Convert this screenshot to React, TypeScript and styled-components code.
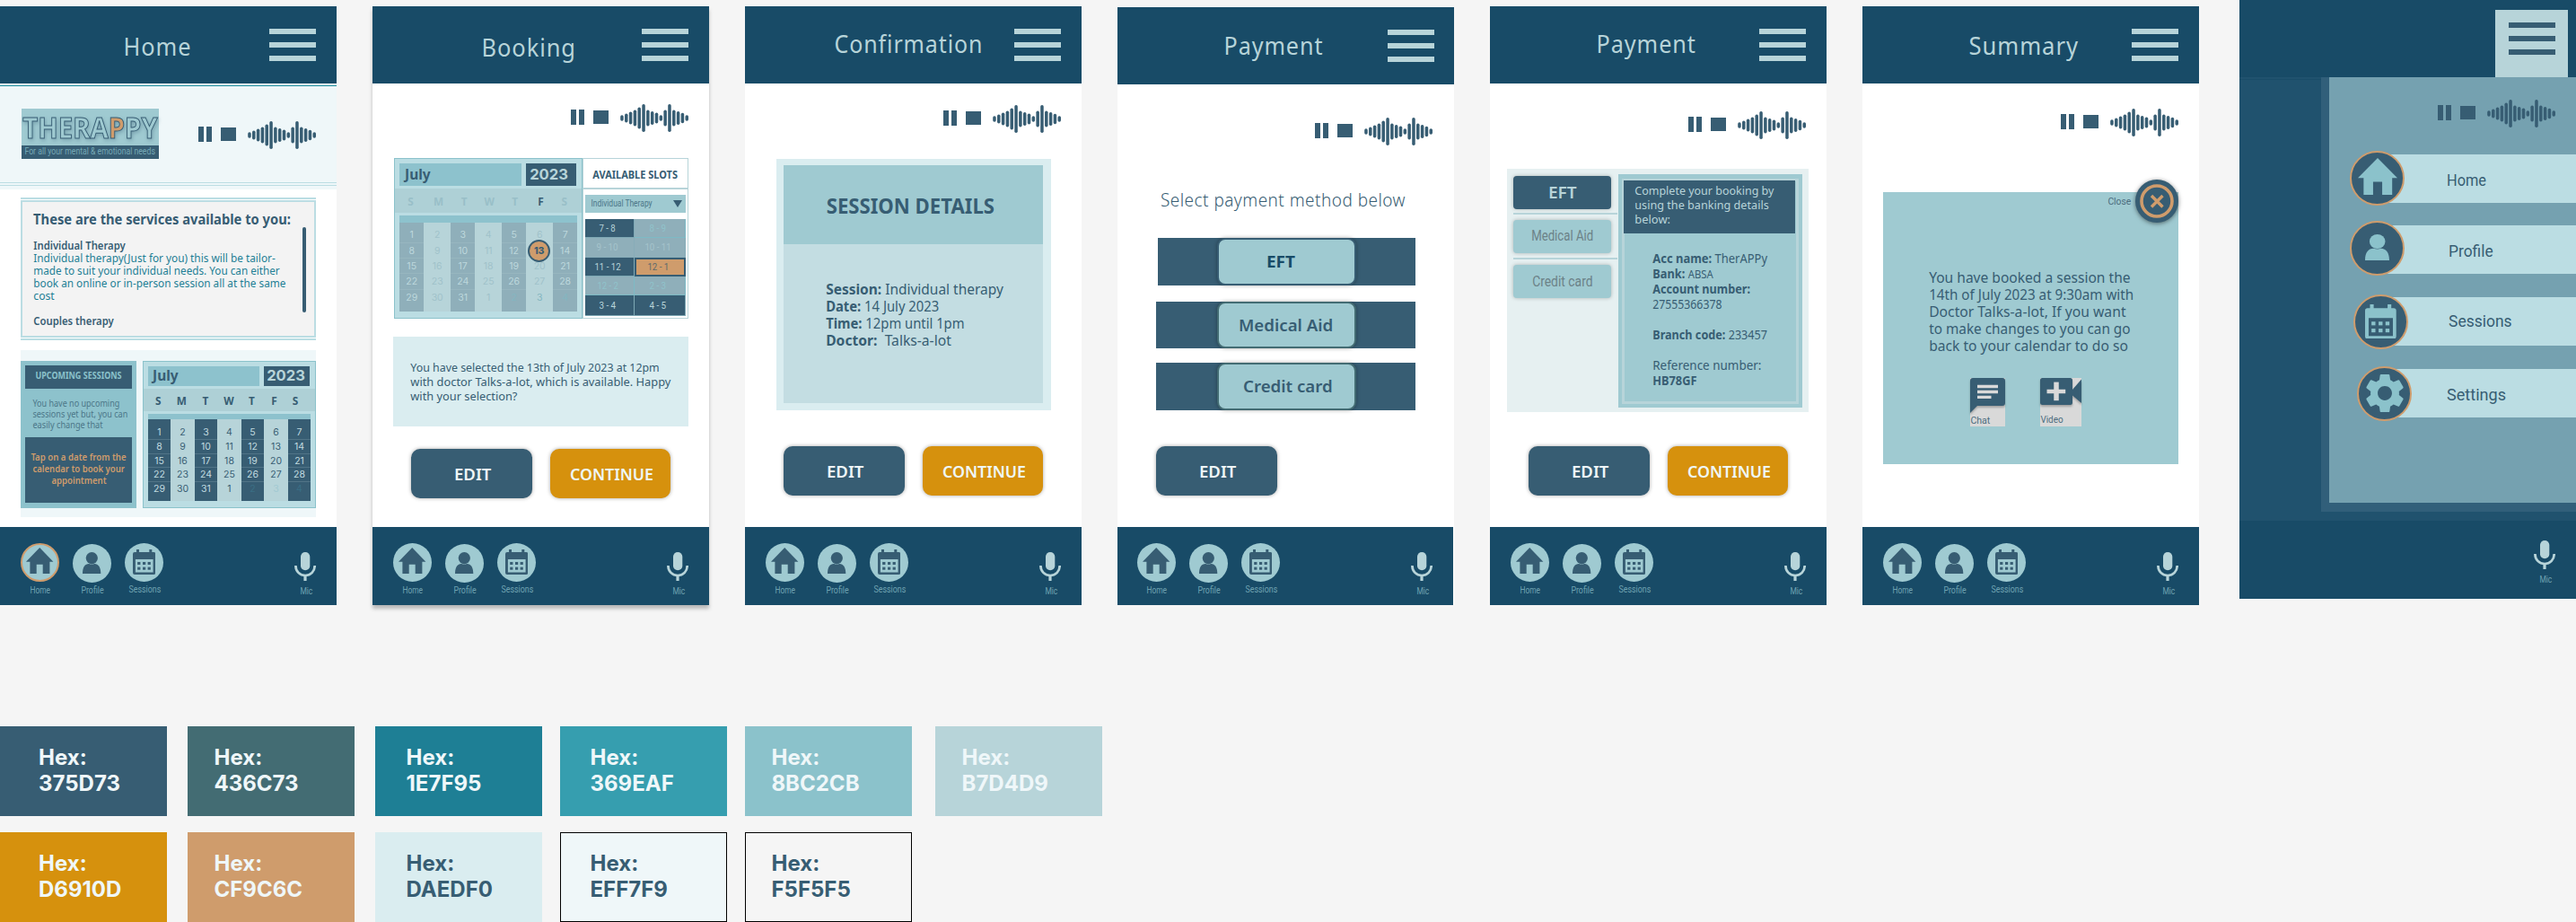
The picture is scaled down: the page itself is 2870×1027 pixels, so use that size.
import React, { useLayoutEffect, useRef, useState } from "react";
import styled, { createGlobalStyle } from "styled-components";

const c = {
  navy: "#184b67",
  slate: "#375d73",
  green: "#436c73",
  teal: "#1e7f95",
  aqua: "#8bc2cb",
  mist: "#b7d4d9",
  pool: "#9fcad1",
  sky: "#bbdde3",
  ice: "#daedf0",
  frost: "#eff7f9",
  smoke: "#f5f5f5",
  amber: "#d6910d",
  copper: "#cf9c6c",
};

const HUMAN = '"Noto Sans", "Open Sans", sans-serif';
const NARROW = 'Roboto, "Liberation Sans", sans-serif';
const GEO = 'Inter, "Liberation Sans", sans-serif';

const GlobalStyle = createGlobalStyle`
  * { box-sizing: border-box; }
  body { margin: 0; background: ${c.smoke}; font-family: ${HUMAN}; }
`;

/* ---------- text ---------- */

const LineBox = styled.div<{ $w: number; $size: number; $lh: number; $weight?: number; $color?: string; $font?: string; $ls?: number; $x?: number; $y?: number }>`
  flex: none;
  width: ${(p) => p.$w}px;
  height: ${(p) => p.$lh}px;
  line-height: ${(p) => p.$lh}px;
  font-family: ${(p) => p.$font || HUMAN};
  font-size: ${(p) => p.$size}px;
  font-weight: ${(p) => p.$weight || 400};
  letter-spacing: ${(p) => p.$ls || 0}px;
  color: ${(p) => p.$color || c.slate};
  margin: ${(p) => p.$y || 0}px 0 0 ${(p) => p.$x || 0}px;
  white-space: pre;
`;
const Stretch = styled.span`
  display: inline-block;
  transform-origin: 0 50%;
`;

type LineProps = { w: number; size: number; lh: number; weight?: number; color?: string; font?: string; ls?: number; x?: number; y?: number; children: React.ReactNode };

/* One line of type, condensed or expanded to its measure; side bearings hang outside it. */
function Line({ w, size, lh, weight, color, font, ls, x, y, children }: LineProps) {
  const ref = useRef<HTMLSpanElement>(null);
  const [scale, setScale] = useState(1);
  const hang = size * 0.055;
  useLayoutEffect(() => {
    const el = ref.current;
    if (!el) return;
    const before = el.style.transform;
    el.style.transform = "none";
    const natural = el.getBoundingClientRect().width - (ls || 0);
    el.style.transform = before;
    if (natural > 0) setScale((w + hang * 2) / natural);
  }, [w, ls, hang]);
  return (
    <LineBox $w={w} $size={size} $lh={lh} $weight={weight} $color={color} $font={font} $ls={ls} $x={x} $y={y}>
      <Stretch ref={ref} style={{ transform: `translateX(${-hang}px) scaleX(${scale})` }}>{children}</Stretch>
    </LineBox>
  );
}

const B = styled.b`
  font-weight: 700;
`;
const Small = styled.span`
  font-size: 12px;
`;

/* ---------- icons ---------- */

const HouseIcon = ({ w = 30.4, h = 29, fill = c.slate }) => (
  <svg width={w} height={h} viewBox="6.3 5 30.4 29" preserveAspectRatio="none" fill={fill}>
    <path d="M21.5 5 6.3 20.7h4.4V34H18V23.7h7V34h7.7V20.7h4z" />
  </svg>
);
const PersonIcon = ({ w = 20.3, h = 23.9, fill = c.slate }) => (
  <svg width={w} height={h} viewBox="11 8.8 20.3 23.9" preserveAspectRatio="none" fill={fill}>
    <circle cx="21.3" cy="15.4" r="6.6" />
    <path d="M11 32.7c0-7 2.6-10.9 7.2-10.9 2 .8 4.2.8 6 0 4.500 0 7.100 4 7.100 10.900z" />
  </svg>
);
const CalendarIcon = ({ w = 25.3, h = 28, fill = c.slate }) => (
  <svg width={w} height={h} viewBox="8.7 7 25.3 28" preserveAspectRatio="none" fill={fill}>
    <path d="M12.700 7h3v3H27V7h3v3h2a2 2 0 0 1 2 2v21a2 2 0 0 1-2 2H10.700a2 2 0 0 1-2-2V12a2 2 0 0 1 2-2h2zM11.600 18v14.600h19.700V18z" fillRule="evenodd" />
    {[21, 26.7].map((y) => [13.9, 19.7, 25.3].map((x) => <rect key={`${x}${y}`} x={x} y={y} width="3.2" height="3" />))}
  </svg>
);
const GearIcon = () => (
  <svg width="42" height="44" viewBox="2.5 2 19 20" preserveAspectRatio="none" fill={c.aqua}>
    <path d="M19.14 12.94c.04-.3.06-.61.06-.94 0-.32-.02-.64-.07-.94l2.03-1.58c.18-.14.23-.41.12-.61l-1.92-3.32c-.12-.22-.37-.29-.59-.22l-2.39.96c-.5-.38-1.03-.7-1.62-.94l-.36-2.54c-.04-.24-.24-.41-.48-.41h-3.84c-.24 0-.43.17-.47.41l-.36 2.54c-.59.24-1.13.57-1.62.94l-2.39-.96c-.22-.08-.47 0-.59.22L2.74 8.87c-.12.21-.08.47.12.61l2.03 1.58c-.05.3-.09.63-.09.94s.02.64.07.94l-2.03 1.58c-.18.14-.23.41-.12.61l1.92 3.32c.12.22.37.29.59.22l2.39-.96c.5.38 1.03.7 1.62.94l.36 2.54c.05.24.24.41.48.41h3.84c.24 0 .44-.17.47-.41l.36-2.54c.59-.24 1.13-.56 1.62-.94l2.39.96c.22.08.47 0 .59-.22l1.92-3.32c.12-.22.07-.47-.12-.61l-2.01-1.58zM12 15.6c-1.98 0-3.6-1.62-3.6-3.6s1.62-3.6 3.6-3.6 3.6 1.62 3.6 3.6-1.62 3.6-3.6 3.6z" />
  </svg>
);
const MicIcon = () => (
  <svg width="24" height="32" viewBox="0 0 24 32">
    <rect x="7" y="0" width="10.300" height="20.300" rx="5.100" fill={c.mist} />
    <path d="M1.400 15c0 6.400 4.600 11 10.700 11s10.600-4.600 10.600-11" fill="none" stroke={c.mist} strokeWidth="2.700" />
    <rect x="10.400" y="26" width="3.200" height="6" fill={c.mist} />
  </svg>
);

/* ---------- audio controls ---------- */

const AudioRow = styled.div<{ $x: number; $y: number }>`
  display: flex;
  flex: none;
  height: 31px;
  margin: ${(p) => p.$y}px 0 0 ${(p) => p.$x}px;
`;
const Pause = styled.i`
  width: 15px;
  height: 17px;
  margin-top: 6px;
  border: solid ${c.slate};
  border-width: 0 6px;
`;
const Stop = styled.i`
  width: 17px;
  height: 15px;
  margin: 7px 13px 0 10px;
  background: ${c.slate};
`;
const WAVE = [6.5, 10, 14, 18, 24, 31, 18, 15, 12, 6.5, 18, 31, 18, 15, 11.5, 6.5];

const Audio = ({ x = 221, y = 0 }) => (
  <AudioRow $x={x} $y={y}>
    <Pause />
    <Stop />
    <svg width="76" height="31" viewBox="0 0 76 31" fill={c.slate}>
      {WAVE.map((h, i) => (
        <rect key={i} x={0.2 + i * 4.82} y={15.5 - h / 2} width="3.500" height={h} rx="1.700" />
      ))}
    </svg>
  </AudioRow>
);

/* ---------- phone frame ---------- */

const Board = styled.main`
  width: 2870px;
  height: 1027px;
  overflow: hidden;
  display: flex;
  flex-direction: column;
`;
const Phones = styled.section`
  display: flex;
  gap: 40px;
  height: 809px;
  flex: none;
`;
const Frame = styled.article<{ $lifted?: boolean; $drop?: number }>`
  flex: none;
  width: 375px;
  height: 667px;
  margin-top: 7px;
  padding-top: ${(p) => p.$drop || 0}px;
  background: #fff;
  display: flex;
  flex-direction: column;
  box-shadow: ${(p) => (p.$lifted ? "0 4px 4px rgba(0,0,0,.25)" : "none")};
`;
const Header = styled.header`
  flex: none;
  height: 86px;
  background: ${c.navy};
  display: flex;
`;
const Burger = styled.div<{ $dark?: boolean; $nudge?: number }>`
  width: 52px;
  height: 36px;
  margin: 25px ${(p) => 23 - (p.$nudge || 0)}px 0 auto;
  display: flex;
  flex-direction: column;
  justify-content: space-between;
  i { height: 6px; background: ${(p) => (p.$dark ? c.slate : c.mist)}; }
`;
const Content = styled.div`
  flex: 1;
  min-height: 0;
  display: flex;
  flex-direction: column;
`;
const Footer = styled.footer<{ $shift?: number }>`
  flex: none;
  height: 87px;
  width: ${(p) => 375 - (p.$shift || 0)}px;
  background: ${c.navy};
  display: flex;
  justify-content: space-between;
  padding: 0 23px 0 ${(p) => 23 - (p.$shift || 0)}px;
`;
const NavList = styled.nav`
  display: flex;
  gap: 15px;
`;
const NavItem = styled.div<{ $y: number }>`
  width: 43px;
  padding-top: ${(p) => p.$y}px;
`;
const Disc = styled.div<{ $active?: boolean; $lift: number }>`
  width: 43px;
  height: 43px;
  border-radius: 50%;
  background: ${c.pool};
  border: ${(p) => (p.$active ? `2px solid ${c.copper}` : "0")};
  display: flex;
  align-items: center;
  justify-content: center;
  padding-bottom: ${(p) => p.$lift}px;
`;
const MicButton = styled.div<{ $y: number }>`
  width: 24px;
  padding-top: ${(p) => p.$y}px;
  svg { display: block; }
`;

const label = { size: 10.3, lh: 12, font: NARROW, color: "#6fa2b1" };

const Mic = ({ y = 28 }) => (
  <MicButton $y={y}>
    <MicIcon />
    <Line {...label} w={12.7} x={7} y={5.8}>Mic</Line>
  </MicButton>
);

type PhoneProps = { title: string; x: number; w: number; base: number; active?: boolean; lifted?: boolean; drop?: number; children: React.ReactNode };

function Phone({ title, x, w, base, active, lifted, drop = 0, children }: PhoneProps) {
  return (
    <Frame $lifted={lifted} $drop={drop}>
      <Header>
        <Line w={w} x={x} y={base - 27.5} size={27} lh={34} weight={400} ls={1} color={c.mist}>{title}</Line>
        <Burger $nudge={drop}><i /><i /><i /></Burger>
      </Header>
      <Content>{children}</Content>
      <Footer $shift={drop}>
        <NavList>
          <NavItem $y={18}>
            <Disc $active={active} $lift={4}><HouseIcon /></Disc>
            <Line {...label} w={21.5} x={11} y={3.800}>Home</Line>
          </NavItem>
          <NavItem $y={19}>
            <Disc $lift={1}><PersonIcon /></Disc>
            <Line {...label} w={24} x={10.300} y={2.800}>Profile</Line>
          </NavItem>
          <NavItem $y={18}>
            <Disc $lift={1}><CalendarIcon /></Disc>
            <Line {...label} w={34.700} x={5} y={2.500}>Sessions</Line>
          </NavItem>
        </NavList>
        <Mic />
      </Footer>
    </Frame>
  );
}

/* ---------- buttons ---------- */

const ButtonRow = styled.div<{ $y: number }>`
  display: flex;
  gap: 20px;
  margin: ${(p) => p.$y}px 0 0 43px;
`;
const Button = styled.button<{ $bg: string; $w: number; $pad: number }>`
  border: 0;
  width: ${(p) => p.$w}px;
  height: 55px;
  padding: 0 0 0 ${(p) => p.$pad}px;
  border-radius: 10px;
  background: ${(p) => p.$bg};
  box-shadow: 0 0 4px rgba(0, 0, 0, 0.35);
  display: flex;
  align-items: center;
  text-align: left;
`;

const Buttons = ({ y, single }: { y: number; single?: boolean }) => (
  <ButtonRow $y={y}>
    <Button $bg={c.slate} $w={135} $pad={48.7}>
      <Line w={39.3} size={18.500} lh={55} weight={600} color={c.frost}>EDIT</Line>
    </Button>
    {!single && (
      <Button $bg={c.amber} $w={134} $pad={23}>
        <Line w={91} size={18.500} lh={53} weight={600} color={c.frost}>CONTINUE</Line>
      </Button>
    )}
  </ButtonRow>
);

/* ---------- calendar ---------- */

const CalendarCard = styled.div<{ $w: number; $h: number }>`
  flex: none;
  width: ${(p) => p.$w}px;
  height: ${(p) => p.$h}px;
  border: 1px solid ${c.aqua};
  background: ${c.sky};
`;
const CalendarHead = styled.div<{ $h: number }>`
  display: flex;
  gap: 5px;
  height: ${(p) => p.$h}px;
  margin: 5px 0 3px 5px;
`;
const Month = styled.div<{ $w: number }>`
  width: ${(p) => p.$w}px;
  background: #8dc2cd;
`;
const Year = styled.div<{ $w: number }>`
  width: ${(p) => p.$w}px;
  background: ${c.slate};
`;
const Weekdays = styled.div<{ $h: number; $cols: string; $pad: number }>`
  height: ${(p) => p.$h}px;
  line-height: ${(p) => p.$h + 1}px;
  padding-left: ${(p) => p.$pad}px;
  display: grid;
  grid-template-columns: ${(p) => p.$cols};
  background: #aed0d6;
  text-align: center;
  font-size: 11.8px;
  font-weight: 700;
`;
const Weekday = styled.span<{ $dim?: boolean }>`
  color: ${(p) => (p.$dim ? "#99bfc8" : c.slate)};
`;
const Days = styled.div<{ $strip: number }>`
  display: flex;
  margin: 3px 0 0 5px;
  width: max-content;
  border-top: ${(p) => p.$strip}px solid #8dc2cd;
`;
const DayColumn = styled.div<{ $w: number; $h: number; $pad: number; $bg: string }>`
  width: ${(p) => p.$w}px;
  height: ${(p) => p.$h}px;
  padding-top: ${(p) => p.$pad}px;
  background: ${(p) => p.$bg};
`;
const Day = styled.div<{ $lh: number; $color: string; $rule?: boolean }>`
  position: relative;
  height: ${(p) => p.$lh}px;
  line-height: ${(p) => p.$lh}px;
  text-align: center;
  font-family: ${GEO};
  font-size: 10.5px;
  color: ${(p) => p.$color};
  box-shadow: ${(p) => (p.$rule ? "inset 0 -1px rgba(183,212,217,.2)" : "none")};
`;
const PickedDay = styled.span`
  position: absolute;
  left: 50%;
  top: 50%;
  width: 25px;
  height: 25px;
  margin: -12px 0 0 -13px;
  border: 2px solid ${c.slate};
  border-radius: 50%;
  background: ${c.copper};
  color: ${c.slate};
  font-weight: 800;
  line-height: 21px;
  z-index: 1;
`;

function Calendar({ booking }: { booking?: boolean }) {
  const m = booking
    ? { w: 210, h: 179, head: 25, month: 136, year: 56, band: 27, cols: "33px 29.300px 27.800px 28.200px 28.900px 28.700px 24px", pad: 1, strip: 8, colH: 99, top: 5.3, lh: 17.400, dark: 27.400, light: 29.600, my: 7.300, yx: 5.3 }
    : { w: 193, h: 164, head: 22, month: 124, year: 51, band: 25, cols: "25.500px 26.500px 26.500px 25.500px 25.500px 25px 22px", pad: 3.600, strip: 6, colH: 91, top: 7.400, lh: 15.650, dark: 25, light: 27, my: 6.300, yx: 4.300 };
  const days = Array.from({ length: 35 }, (_, i) => (i < 31 ? i + 1 : i - 30));
  const tone = (col: number, row: number) => {
    const tail = row === 4 && col > 3;
    if (booking) return tail ? "#84b6c1" : col % 2 ? "#a0c2ca" : "#bdd8dd";
    if (tail) return col % 2 ? "#a2cad2" : "#3a6f85";
    return col % 2 ? c.slate : "#c2dce0";
  };
  return (
    <CalendarCard $w={m.w} $h={m.h}>
      <CalendarHead $h={m.head}>
        <Month $w={m.month}><Line w={26.800} x={m.my} size={16} lh={m.head - 1} weight={700}>July</Line></Month>
        <Year $w={m.year}><Line w={41} x={m.yx} size={15.800} lh={m.head} weight={700} font={GEO} color={c.mist}>2023</Line></Year>
      </CalendarHead>
      <Weekdays $h={m.band} $cols={m.cols} $pad={m.pad}>
        {"SMTWTFS".split("").map((d, i) => <Weekday key={i} $dim={booking && i !== 5}>{d}</Weekday>)}
      </Weekdays>
      <Days $strip={m.strip}>
        {[0, 1, 2, 3, 4, 5, 6].map((col) => (
          <DayColumn key={col} $w={col % 2 ? m.light : m.dark} $h={m.colH} $pad={m.top} $bg={col % 2 ? c.mist : booking ? "#8fafba" : c.slate}>
            {[0, 1, 2, 3, 4].map((row) => {
              const n = days[row * 7 + col];
              return (
                <Day key={row} $lh={m.lh} $color={tone(col, row)} $rule={row < 4 && col % 2 === 0}>
                  {booking && n === 13 ? <PickedDay>13</PickedDay> : n}
                </Day>
              );
            })}
          </DayColumn>
        ))}
      </Days>
    </CalendarCard>
  );
}

/* ---------- home ---------- */

const Banner = styled.div`
  flex: none;
  height: 116px;
  margin-top: 2px;
  border-top: 1px solid #15899a;
  background: ${c.frost};
`;
const BannerRow = styled.div`
  height: 107px;
  display: flex;
`;
const BannerRule = styled.div`
  height: 4px;
  border: solid ${c.sky};
  border-width: 1px 0;
`;
const Logo = styled.div`
  width: 153px;
  height: 56px;
  margin: 25px 0 0 24px;
  background: ${c.pool};
`;
const Wordmark = styled.div`
  height: 41px;
  color: #9fcad1;
  -webkit-text-stroke: 1px ${c.slate};
  filter: drop-shadow(1px 2px 2px rgba(55, 93, 115, 0.35));
  em { font-style: normal; color: ${c.copper}; }
`;
const Tagline = styled.div`
  height: 15px;
  background: ${c.slate};
`;
const Services = styled.div`
  flex: none;
  width: 329px;
  height: 159px;
  margin: 9px 0 0 23px;
  padding: 1px 0;
  border: solid ${c.sky};
  border-width: 2px 0;
`;
const ServicesBox = styled.div`
  height: 153px;
  border: 2px solid ${c.sky};
  background: #f3f3f3;
  display: flex;
  justify-content: space-between;
  padding: 0 9px 0 13.3px;
`;
const ServicesText = styled.div`
  padding-top: 9.3px;
`;
const Scrollbar = styled.i`
  width: 4px;
  height: 95px;
  margin-top: 28px;
  border-radius: 2px;
  background: ${c.slate};
`;
const Gap = styled.div<{ $h: number }>`
  height: ${(p) => p.$h}px;
`;
const SessionsPanel = styled.div`
  flex: none;
  width: 329px;
  height: 186px;
  margin: 11px 0 0 23px;
  padding-top: 12px;
  background: ${c.frost};
  display: flex;
  gap: 7px;
`;
const Upcoming = styled.div`
  width: 129px;
  height: 164px;
  padding: 5px;
  background: #8dc2cc;
`;
const UpcomingTitle = styled.div`
  height: 26px;
  background: ${c.slate};
  display: flex;
  justify-content: center;
`;
const UpcomingNote = styled.div`
  padding: 9.7px 0 8.3px 9px;
`;
const UpcomingHint = styled.div`
  height: 73px;
  padding-top: 15.5px;
  background: ${c.slate};
  display: flex;
  flex-direction: column;
  align-items: center;
`;

const Home = () => {
  const s = { size: 12.8, lh: 14, color: c.teal };
  const n = { size: 10.800, lh: 12, color: "#4b7688" };
  const h = { size: 11.2, lh: 13, color: c.copper, weight: 600 };
  return (
    <Phone title="Home" x={139} w={72} base={55} active>
      <Banner>
        <BannerRow>
          <Logo>
            <Wordmark><Line w={147} x={2.8} size={32.500} lh={41} weight={700} color="inherit">THERA<em>P</em>PY</Line></Wordmark>
            <Tagline><Line w={144.300} x={4} size={10.3} lh={13.500} font={NARROW} color="#76a9b6">For all your mental &amp; emotional needs</Line></Tagline>
          </Logo>
          <Audio x={44} y={39} />
        </BannerRow>
        <BannerRule />
      </Banner>
      <Services>
        <ServicesBox>
          <ServicesText>
            <Line w={285} size={16.300} lh={20} weight={700}>These are the services available to you:</Line>
            <Gap $h={12.2} />
            <Line {...s} w={101} weight={600} color={c.slate}>Individual Therapy</Line>
            <Line {...s} w={268}>Individual therapy(Just for you) this will be tailor-</Line>
            <Line {...s} w={273}>made to suit your individual needs. You can either</Line>
            <Line {...s} w={279.700}>book an online or in-person session all at the same</Line>
            <Line {...s} w={22}>cost</Line>
            <Gap $h={14} />
            <Line {...s} w={88} weight={600} color={c.slate}>Couples therapy</Line>
          </ServicesText>
          <Scrollbar />
        </ServicesBox>
      </Services>
      <SessionsPanel>
        <Upcoming>
          <UpcomingTitle><Line w={95} size={10.200} lh={22.500} weight={700} color={c.aqua}>UPCOMING SESSIONS</Line></UpcomingTitle>
          <UpcomingNote>
            <Line {...n} w={95.700}>You have no upcoming</Line>
            <Line {...n} w={104.700}>sessions yet but, you can</Line>
            <Line {...n} w={77}>easily change that</Line>
          </UpcomingNote>
          <UpcomingHint>
            <Line {...h} w={105}>Tap on a date from the</Line>
            <Line {...h} w={101.300}>calendar to book your</Line>
            <Line {...h} w={60}>appointment</Line>
          </UpcomingHint>
        </Upcoming>
        <Calendar />
      </SessionsPanel>
    </Phone>
  );
};

/* ---------- booking ---------- */

const BookingCard = styled.div`
  display: flex;
  flex: none;
  margin: 29px 0 0 24px;
`;
const Slots = styled.div`
  width: 118px;
  height: 179px;
  border: 1px solid ${c.mist};
`;
const SlotsTitle = styled.div`
  height: 34px;
  padding-left: 11px;
  border-bottom: 2px solid ${c.mist};
`;
const SlotSelect = styled.div`
  width: 112px;
  height: 20px;
  margin: 6px 0 7px 2px;
  padding: 0 4px 0 7px;
  background: ${c.pool};
  display: flex;
  align-items: center;
  justify-content: space-between;
`;
const SlotGrid = styled.div`
  width: 112px;
  margin-left: 2px;
  display: grid;
  grid-template-columns: 54.5px 57.5px;
  grid-template-rows: 21px 22px 21px 21px 23px;
  height: 108px;
`;
const slotTone = {
  open: { bg: c.slate, ink: "#b7d4d9", edge: "#7fa9b5" },
  full: { bg: "#8fafba", ink: "#a5c3cb", edge: "#87acb8" },
  faint: { bg: "#8fafba", ink: "#8fc3cb", edge: "#7dbac5" },
  picked: { bg: c.copper, ink: "#5d6a6b", edge: c.slate },
};
const Slot = styled.div<{ $tone: keyof typeof slotTone }>`
  display: flex;
  align-items: center;
  justify-content: center;
  padding-right: 4px;
  background: ${(p) => slotTone[p.$tone].bg};
  border: 0 solid ${(p) => slotTone[p.$tone].edge};
  border-width: ${(p) => (p.$tone === "picked" ? "2px" : "0 1px 1px 0")};
`;
const SLOTS: [string, number, keyof typeof slotTone][] = [
  ["7 - 8", 17, "open"], ["8 - 9", 17.5, "faint"],
  ["9 - 10", 23, "full"], ["10 - 11", 28, "full"],
  ["11 - 12", 28, "open"], ["12 - 1", 22.7, "picked"],
  ["12 - 2", 22.3, "faint"], ["2 - 3", 17.5, "faint"],
  ["3 - 4", 17.5, "open"], ["4 - 5", 17.5, "open"],
];
const Message = styled.div`
  flex: none;
  width: 329px;
  height: 100px;
  margin: 20px 0 0 23px;
  padding: 26px 0 0 20px;
  background: ${c.ice};
`;

const Booking = () => {
  const t = { size: 12.800, lh: 16 };
  return (
    <Phone title="Booking" x={122.5} w={101.500} base={56} lifted>
      <Audio y={23} />
      <BookingCard>
        <Calendar booking />
        <Slots>
          <SlotsTitle><Line w={93.300} size={11.800} lh={34} weight={700}>AVAILABLE SLOTS</Line></SlotsTitle>
          <SlotSelect>
            <Line w={67} size={10.800} lh={20} font={NARROW} color="#4b7688">Individual Therapy</Line>
            <svg width="10" height="8" viewBox="0 0 10 8"><path d="M0 0h10L5 8z" fill={c.slate} /></svg>
          </SlotSelect>
          <SlotGrid>
            {SLOTS.map(([text, w, tone]) => (
              <Slot key={text} $tone={tone}>
                <Line w={w} size={10.500} lh={17} font={NARROW} color={slotTone[tone].ink}>{text}</Line>
              </Slot>
            ))}
          </SlotGrid>
        </Slots>
      </BookingCard>
      <Message>
        <Line {...t} w={276}>You have selected the 13th of July 2023 at 12pm</Line>
        <Line {...t} w={288.700}>with doctor Talks-a-lot, which is available. Happy</Line>
        <Line {...t} w={117.700}>with your selection?</Line>
      </Message>
      <Buttons y={25} />
    </Phone>
  );
};

/* ---------- confirmation ---------- */

const Ticket = styled.div`
  flex: none;
  width: 306px;
  height: 280px;
  margin: 29px 0 0 35px;
  padding: 7px 9px 8px 8px;
  background: ${c.ice};
`;
const TicketHead = styled.div`
  height: 88px;
  padding: 29.6px 0 0 49.3px;
  background: ${c.pool};
`;
const TicketBody = styled.div`
  height: 177px;
  padding: 40.8px 0 0 48.3px;
  background: #c3dde2;
`;

const Confirmation = () => {
  const t = { size: 15.500, lh: 19.100 };
  return (
    <Phone title="Confirmation" x={101} w={162} base={52}>
      <Audio y={24} />
      <Ticket>
        <TicketHead><Line w={184.700} size={23.300} lh={30} weight={700}>SESSION DETAILS</Line></TicketHead>
        <TicketBody>
          <Line {...t} w={196}><B>Session:</B> Individual therapy</Line>
          <Line {...t} w={124.300}><B>Date:</B> 14 July 2023</Line>
          <Line {...t} w={152.700}><B>Time:</B> 12pm until 1pm</Line>
          <Line {...t} w={138}><B>Doctor:</B>{"  "}Talks-a-lot</Line>
        </TicketBody>
      </Ticket>
      <Buttons y={40} />
    </Phone>
  );
};

/* ---------- payment ---------- */

const Option = styled.div<{ $x: number; $y: number; $h: number }>`
  flex: none;
  width: ${(p) => 332 - p.$x}px;
  height: ${(p) => p.$h}px;
  margin: ${(p) => p.$y}px 0 0 ${(p) => p.$x}px;
  padding-left: ${(p) => 111 - p.$x}px;
  background: ${c.slate};
`;
const OptionButton = styled.div<{ $edge: string; $pad: number }>`
  width: 155px;
  height: 100%;
  padding-left: ${(p) => p.$pad}px;
  border: 2px solid ${(p) => p.$edge};
  border-radius: 9px;
  background: ${c.pool};
  box-shadow: 0 0 4px rgba(0, 0, 0, 0.35);
`;

const PaymentMethod = () => {
  const t = { size: 18.500, lh: 48, weight: 600 };
  return (
    <Phone title="Payment" x={120} w={107} base={53.200} drop={1}>
      <Audio x={220} y={37} />
      <Line w={270.500} x={49.300} y={49} size={19.500} lh={24} weight={300} ls={0.500}>Select payment method below</Line>
      <Option $x={45} $y={30} $h={53}>
        <OptionButton $edge={c.slate} $pad={53.7}><Line {...t} w={30} color={c.navy} weight={700}>EFT</Line></OptionButton>
      </Option>
      <Option $x={43} $y={18} $h={52}>
        <OptionButton $edge={c.green} $pad={22.7}><Line {...t} w={103.300}>Medical Aid</Line></OptionButton>
      </Option>
      <Option $x={43} $y={16} $h={53}>
        <OptionButton $edge={c.green} $pad={27.7}><Line {...t} w={97.700}>Credit card</Line></OptionButton>
      </Option>
      <Buttons y={40} single />
    </Phone>
  );
};

const BankCard = styled.div`
  flex: none;
  width: 336px;
  height: 271px;
  margin: 33px 0 0 19px;
  padding-left: 7px;
  background: #e6f0f1;
  display: flex;
`;
const Tabs = styled.div`
  width: 117px;
  padding-top: 8px;
`;
const Tab = styled.div<{ $on?: boolean }>`
  width: 109px;
  height: 37px;
  border-radius: 4px;
  background: ${(p) => (p.$on ? c.slate : c.pool)};
  box-shadow: 0 0 4px rgba(0, 0, 0, 0.25);
  display: flex;
  justify-content: center;
`;
const TabRule = styled.div<{ $y: number }>`
  width: 116px;
  height: 2px;
  margin: ${(p) => p.$y}px 0 6px;
  background: ${c.mist};
`;
const BankPanel = styled.div`
  width: 205px;
  height: 260px;
  margin-top: 6px;
  padding: 5px 4px 4px;
  background: ${c.pool};
`;
const BankInner = styled.div`
  height: 251px;
  border: 3px solid ${c.mist};
`;
const BankHead = styled.div`
  width: 191px;
  height: 59px;
  margin: -1px 0 0 -1px;
  padding: 3.1px 0 0 13.3px;
  background: ${c.slate};
`;
const BankRows = styled.div`
  padding: 18.6px 0 0 32px;
`;

const PaymentBank = () => {
  const h = { size: 12.800, lh: 16, color: c.mist };
  const t = { size: 13.600, lh: 17 };
  return (
    <Phone title="Payment" x={119.500} w={107.500} base={52}>
      <Audio y={31} />
      <BankCard>
        <Tabs>
          <Tab $on><Line w={29.700} size={18.500} lh={36} weight={600} color={c.mist}>EFT</Line></Tab>
          <TabRule $y={4} />
          <Tab><Line w={67.300} size={15.700} lh={35} font={NARROW} color="#6c8288">Medical Aid</Line></Tab>
          <TabRule $y={5} />
          <Tab><Line w={65.700} size={15.700} lh={38} font={NARROW} color="#6c8288">Credit card</Line></Tab>
        </Tabs>
        <BankPanel>
          <BankInner>
            <BankHead>
              <Line {...h} w={153.700}>Complete your booking by</Line>
              <Line {...h} w={148}>using the banking details</Line>
              <Line {...h} w={38.300}>below:</Line>
            </BankHead>
            <BankRows>
              <Line {...t} w={126.300}><B>Acc name:</B> TherAPPy</Line>
              <Line {...t} w={66}><B>Bank:</B> <Small>ABSA</Small></Line>
              <Line {...t} w={107.300} weight={700}>Account number:</Line>
              <Line {...t} w={75.700}>27555366378</Line>
              <Gap $h={17} />
              <Line {...t} w={126.300}><B>Branch code:</B> 233457</Line>
              <Gap $h={17} />
              <Line {...t} w={119.700}>Reference number:</Line>
              <Line {...t} w={47.700} weight={700}>HB78GF</Line>
            </BankRows>
          </BankInner>
        </BankPanel>
      </BankCard>
      <Buttons y={38} />
    </Phone>
  );
};

/* ---------- summary ---------- */

const SummaryCard = styled.div`
  position: relative;
  flex: none;
  width: 329px;
  height: 303px;
  margin: 62px 0 0 23px;
  padding-top: 4px;
  background: ${c.pool};
`;
const CloseBadge = styled.div`
  position: absolute;
  top: -14px;
  right: 0;
  width: 48px;
  height: 48px;
  border-radius: 50%;
  background: ${c.slate};
  box-shadow: 0 1px 5px rgba(0, 0, 0, 0.5);
`;
const Actions = styled.div`
  display: flex;
  gap: 39px;
  margin: 26px 0 0 97px;
`;
const Action = styled.div<{ $w: number }>`
  width: ${(p) => p.$w}px;
  height: 54px;
  background: #d9d9d9;
  svg { display: block; filter: drop-shadow(0 2px 1px rgba(0, 0, 0, 0.25)); }
`;

const Summary = () => {
  const t = { size: 15.500, lh: 19.100 };
  const l = { size: 11, lh: 12, font: NARROW, color: "#4b6c7e" };
  return (
    <Phone title="Summary" x={119.500} w={118.500} base={54.200}>
      <Audio y={28} />
      <SummaryCard>
        <CloseBadge>
          <svg width="48" height="48" viewBox="0 0 48 48" fill="none" stroke={c.copper}>
            <circle cx="24" cy="24" r="17" strokeWidth="3.600" />
            <path d="M18 18l12.500 12.500M30.500 18L18 30.500" strokeWidth="3.400" />
          </svg>
        </CloseBadge>
        <Line w={24.700} x={251.300} size={11.200} lh={14} font={NARROW} color="#4b6c7e">Close</Line>
        <Gap $h={67.6} />
        <Line {...t} x={52.300} w={222.700}>You have booked a session the</Line>
        <Line {...t} x={52.300} w={226.300}>14th of July 2023 at 9:30am with</Line>
        <Line {...t} x={52.300} w={217.700}>Doctor Talks-a-lot, If you want</Line>
        <Line {...t} x={52.300} w={222.700}>to make changes to you can go</Line>
        <Line {...t} x={52.300} w={220}>back to your calendar to do so</Line>
        <Actions>
          <Action $w={39}>
            <svg width="39" height="42" viewBox="0 0 39 42">
              <path d="M3 0h33a3 3 0 0 1 3 3v25a3 3 0 0 1-3 3H8l-8 8V3a3 3 0 0 1 3-3z" fill={c.slate} />
              <path d="M8 9.500h23M8 15.500h23M8 21.300h15.500" stroke="#d9d9d9" strokeWidth="3.300" />
            </svg>
            <Line {...l} x={0.6} w={20.700}>Chat</Line>
          </Action>
          <Action $w={46}>
            <svg width="46" height="41" viewBox="0 0 46 41">
              <path d="M2.500 0h31A2.500 2.500 0 0 1 36 2.500V13L46 1.500V28L36 19.500v8a2.500 2.500 0 0 1-2.500 2.500h-31A2.500 2.500 0 0 1 0 27.500v-25A2.500 2.500 0 0 1 2.500 0z" fill={c.slate} />
              <path d="M18 4.600v20.600" stroke="#d9d9d9" strokeWidth="5.500" />
              <path d="M7.500 15h20.700" stroke="#d9d9d9" strokeWidth="4.500" />
            </svg>
            <Line {...l} x={0.6} w={24}>Video</Line>
          </Action>
        </Actions>
      </SummaryCard>
    </Phone>
  );
};

/* ---------- open menu ---------- */

const MenuFrame = styled.article`
  flex: none;
  width: 375px;
  height: 667px;
  margin-left: 5px;
  background: #20526e;
  display: flex;
  flex-direction: column;
`;
const OpenBurger = styled.div`
  width: 81px;
  height: 75px;
  margin: 11px 9px 0 auto;
  padding-right: 14px;
  background: ${c.mist};
  display: flex;
  ${Burger} { margin: 14px 0 0 auto; }
`;
const DrawerArea = styled.div`
  height: 494px;
  padding-left: 91px;
  background: linear-gradient(#194c68, #194c68) 0 2px / 91px 1px no-repeat;
`;
const Drawer = styled.div`
  height: 484px;
  padding: 0 0 10px 9px;
  background: #315f7a;
`;
const DrawerInner = styled.div`
  height: 474px;
  background: #75a1b0;
  display: flex;
  flex-direction: column;
`;
const MenuItem = styled.div<{ $x: number; $y: number }>`
  display: flex;
  flex: none;
  height: 61px;
  margin: ${(p) => p.$y}px 0 0 ${(p) => p.$x}px;
`;
const MenuDisc = styled.div<{ $lift: number }>`
  z-index: 1;
  flex: none;
  width: 61px;
  height: 61px;
  border: 2px solid ${c.copper};
  border-radius: 50%;
  background: ${c.slate};
  display: flex;
  align-items: center;
  justify-content: center;
  padding-bottom: ${(p) => p.$lift}px;
`;
const MenuBar = styled.div<{ $y: number; $pad: number }>`
  flex: 1;
  height: 54px;
  margin: ${(p) => p.$y}px 0 0 -20px;
  padding-left: ${(p) => p.$pad}px;
  background: ${c.sky};
`;
const MenuFooter = styled.footer`
  height: 87px;
  padding-right: 23px;
  background: ${c.navy};
  display: flex;
  justify-content: flex-end;
`;

const ITEMS = [
  { name: "Home", icon: <HouseIcon w={44} h={41} fill={c.aqua} />, x: 23, y: 26, bar: 4, pad: 67.7, w: 42, lh: 58, lift: 5 },
  { name: "Profile", icon: <PersonIcon w={27} h={29} fill={c.aqua} />, x: 23, y: 17, bar: 5, pad: 69.7, w: 47.6, lh: 57, lift: 3 },
  { name: "Sessions", icon: <CalendarIcon w={34.7} h={38.5} fill={c.aqua} />, x: 27, y: 21, bar: 3, pad: 65.7, w: 68.6, lh: 53, lift: 1 },
  { name: "Settings", icon: <GearIcon />, x: 31, y: 19, bar: 3, pad: 59.7, w: 64, lh: 58, lift: 1 },
];

const Menu = () => (
  <MenuFrame>
    <Header>
      <OpenBurger><Burger $dark><i /><i /><i /></Burger></OpenBurger>
    </Header>
    <DrawerArea>
      <Drawer>
        <DrawerInner>
          <Audio x={121} y={25} />
          {ITEMS.map((m) => (
            <MenuItem key={m.name} $x={m.x} $y={m.y}>
              <MenuDisc $lift={m.lift}>{m.icon}</MenuDisc>
              <MenuBar $y={m.bar} $pad={m.pad}>
                <Line w={m.w} size={18} lh={m.lh} font={NARROW}>{m.name}</Line>
              </MenuBar>
            </MenuItem>
          ))}
        </DrawerInner>
      </Drawer>
    </DrawerArea>
    <MenuFooter><Mic y={22} /></MenuFooter>
  </MenuFrame>
);

/* ---------- palette ---------- */

const Palette = styled.section`
  display: grid;
  grid-template-columns: 209px 209px 206px 206px 212px 186px;
  grid-template-rows: 100px 100px;
  row-gap: 18px;
`;
const Swatch = styled.div<{ $hex: string; $ink: string; $pad: number; $outlined?: boolean }>`
  width: 186px;
  height: 100px;
  padding: 19.5px 0 0 ${(p) => p.$pad}px;
  background: ${(p) => p.$hex};
  color: ${(p) => p.$ink};
  box-shadow: ${(p) => (p.$outlined ? "inset 0 0 0 1px #000" : "none")};
  font-family: ${GEO};
  font-size: 24px;
  font-weight: 700;
  line-height: 29px;
`;
const SWATCHES: [string, boolean?, boolean?][] = [
  ["375D73"], ["436C73"], ["1E7F95"], ["369EAF"], ["8BC2CB"], ["B7D4D9"],
  ["D6910D"], ["CF9C6C"], ["DAEDF0", true], ["EFF7F9", true, true], ["F5F5F5", true, true],
];
const INSETS = [43, 29.5, 34.5, 33.5, 29.5, 29.5];

export default function App() {
  return (
    <Board>
      <GlobalStyle />
      <Phones>
        <Home />
        <Booking />
        <Confirmation />
        <PaymentMethod />
        <PaymentBank />
        <Summary />
        <Menu />
      </Phones>
      <Palette>
        {SWATCHES.map(([hex, dark, outlined], i) => (
          <Swatch key={hex} $hex={`#${hex}`} $ink={dark ? c.slate : c.frost} $pad={INSETS[i % 6]} $outlined={outlined}>
            Hex:<br />{hex}
          </Swatch>
        ))}
      </Palette>
    </Board>
  );
}
